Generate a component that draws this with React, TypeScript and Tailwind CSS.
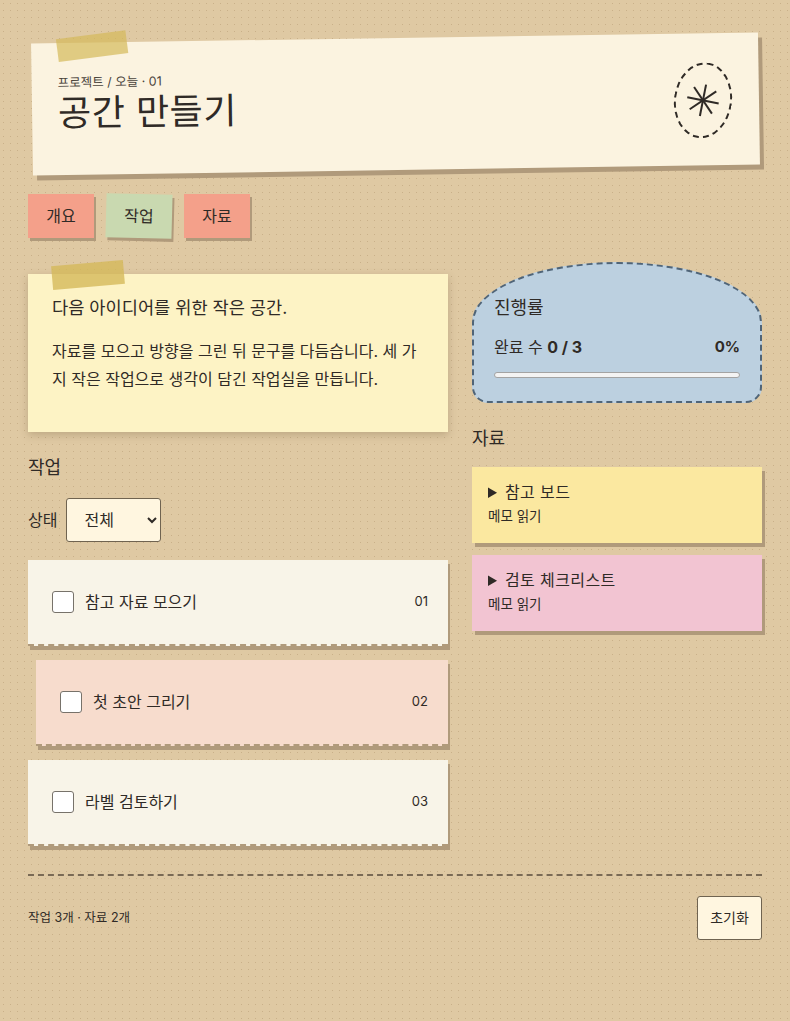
const FONT = "font-['Inter','Noto_Sans_CJK_KR',sans-serif]";

function Spark() {
  const spokes = [0, 45, 90, 135];
  return (
    <svg width="36" height="36" viewBox="-18 -18 36 36" className="rotate-[4deg]">
      {spokes.map((a) => (
        <line key={a} x1="0" y1="-16" x2="0" y2="16" stroke="#2f2a26" strokeWidth="2" transform={`rotate(${a})`} />
      ))}
    </svg>
  );
}

function Tab({ label, active }: { label: string; active?: boolean }) {
  return (
    <button
      className={
        active
          ? "h-11 w-[66px] rotate-[1.5deg] bg-[#c9d9b0] text-base text-[#2f2a26] shadow-[2px_3px_0_#b09a7b]"
          : "h-11 w-[66px] bg-[#f4a08a] text-base text-[#2f2a26] shadow-[2px_3px_0_#b09a7b]"
      }
    >
      {label}
    </button>
  );
}

function Task({ label, num, shifted }: { label: string; num: string; shifted?: boolean }) {
  return (
    <div
      className={
        shifted
          ? "ml-2 flex h-[86px] items-center justify-between border-b-2 border-dashed border-[#b09a7b] bg-[#f7dccd] pl-6 pr-5 shadow-[2px_4px_0_#b09a7b]"
          : "flex h-[86px] items-center justify-between border-b-2 border-dashed border-[#b09a7b] bg-[#f8f4e8] pl-6 pr-5 shadow-[2px_4px_0_#b09a7b]"
      }
    >
      <label className="flex items-center gap-[11px] text-base">
        <input type="checkbox" className="h-[22px] w-[22px] appearance-none rounded-[3px] border border-[#77726a] bg-white" />
        {label}
      </label>
      <span className="text-[13px]">{num}</span>
    </div>
  );
}

function Resource({ title, color }: { title: string; color: string }) {
  return (
    <div className={`h-[76px] px-4 pt-[13px] shadow-[3px_4px_0_#b09a7b] ${color}`}>
      <details>
        <summary className="text-base leading-[24px] tracking-[0.4px]">{title}</summary>
      </details>
      <p className="mt-[3px] text-[13.5px] leading-[18px]">메모 읽기</p>
    </div>
  );
}

export default function App() {
  return (
    <div
      className={`min-h-[1021px] bg-[#dfc9a3] bg-[radial-gradient(#c9b089_0.9px,transparent_0.9px)] bg-[length:7px_7px] px-7 pt-[38px] text-[#2f2a26] ${FONT}`}
    >
      {/* Header */}
      <header className="relative ml-1 mr-[3px] flex h-[132px] -rotate-[0.87deg] items-start justify-between bg-[#fbf3e0] pl-[26px] pr-[27px] pt-[31px] shadow-[4px_5px_0_#b09a7b]">
        <span className="absolute left-[26px] top-[-8px] h-[23px] w-[70px] -rotate-[6.5deg] bg-[#d4b95a]/70" />
        <div>
          <p className="text-[12.5px] leading-[18px] text-[#4a443c]">프로젝트 / 오늘 · 01</p>
          <h1 className="mt-[-1px] text-[36px] font-normal leading-[44px] tracking-[0.5px]">공간 만들기</h1>
        </div>
        <div className="mt-[-2px] flex h-[76px] w-[58px] rotate-[8deg] items-center justify-center rounded-[50%] border-2 border-dashed border-[#2f2a26]">
          <Spark />
        </div>
      </header>

      {/* Tabs */}
      <nav className="mt-6 flex gap-3">
        <Tab label="개요" />
        <Tab label="작업" active />
        <Tab label="자료" />
      </nav>

      <main className="mt-6 grid grid-cols-[420px_290px] gap-6">
        <div>
          <section className="relative mt-3 h-[158px] bg-[#fdf3c5] px-6 pt-[22px] shadow-[0_3px_8px_rgba(90,70,40,0.25)]">
            <span className="absolute left-6 top-[-11px] h-6 w-[72px] -rotate-[5deg] bg-[#d4b95a]/80" />
            <h2 className="text-[17.6px] font-normal leading-[24px]">다음 아이디어를 위한 작은 공간.</h2>
            <p className="mt-[17px] text-base leading-[28px]">
              자료를 모으고 방향을 그린 뒤 문구를 다듬습니다. 세 가지 작은 작업으로 생각이 담긴 작업실을 만듭니다.
            </p>
          </section>

          <h2 className="mt-6 text-lg font-normal leading-[24px]">작업</h2>
          <div className="mt-[18px] flex items-center gap-[9px] text-base">
            <span>상태</span>
            <select className="h-11 w-[95px] rounded-[3px] border border-[#6f6350] bg-[#fff6e0] pl-[13px] text-base">
              <option>전체</option>
            </select>
          </div>

          <div className="mt-[18px] flex flex-col gap-[14px]">
            <Task label="참고 자료 모으기" num="01" />
            <Task label="첫 초안 그리기" num="02" shifted />
            <Task label="라벨 검토하기" num="03" />
          </div>
        </div>

        <aside>
          <section className="h-[141px] rounded-[145px_145px_16px_16px/60px_60px_16px_16px] border-2 border-dashed border-[#4f6478] bg-[#bcd0e0] px-5 pt-[30px]">
            <h2 className="text-lg font-normal leading-[28px]">진행률</h2>
            <div className="mt-[13px] flex items-center justify-between text-base leading-[24px]">
              <span>
                완료 수 <b>0 / 3</b>
              </span>
              <b className="text-[15px]">0%</b>
            </div>
            <div className="mt-[13px] h-[6px] rounded-full border border-[#a3a3a3] bg-[#f3f3f3]" />
          </section>

          <h2 className="mt-6 text-lg font-normal leading-[24px]">자료</h2>
          <div className="mt-4 flex flex-col gap-3">
            <Resource title="참고 보드" color="bg-[#fbe8a0]" />
            <Resource title="검토 체크리스트" color="bg-[#f2c4d2]" />
          </div>
        </aside>
      </main>

      {/* Footer */}
      <footer className="mt-[28px] flex items-center justify-between border-t-2 border-dashed border-[#7a6a55] pt-5">
        <span className="text-[12.5px]">작업 3개 · 자료 2개</span>
        <button className="h-11 w-[65px] rounded-[3px] border border-[#6f6350] bg-[#fff6e0] text-sm">초기화</button>
      </footer>
    </div>
  );
}
